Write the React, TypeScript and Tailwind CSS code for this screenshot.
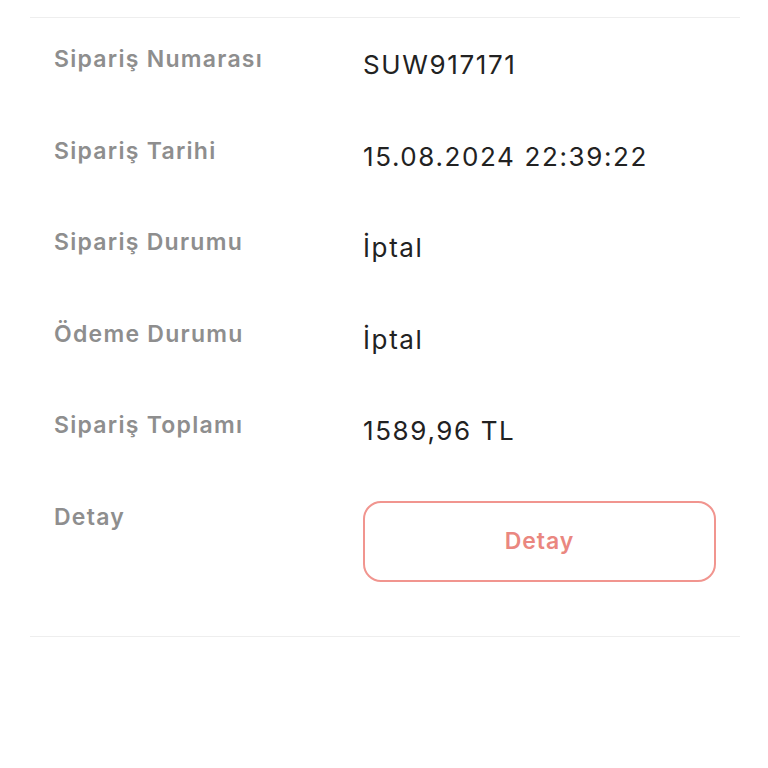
import React from "react";

const rows: { label: string; value: string }[] = [
  { label: "Sipariş Numarası", value: "SUW917171" },
  { label: "Sipariş Tarihi", value: "15.08.2024 22:39:22" },
  { label: "Sipariş Durumu", value: "İptal" },
  { label: "Ödeme Durumu", value: "İptal" },
  { label: "Sipariş Toplamı", value: "1589,96 TL" },
];

export default function App() {
  return (
    <div className="w-[768px] h-[768px] bg-white pt-[17px] pl-[30px] pr-[28px] font-['Inter',sans-serif]">
      <div className="border-t border-b border-[#eeeeee] pt-[27px] pb-[54px] pl-[24px]">
        {rows.map((r) => (
          <div key={r.label} className="flex h-[91.6px] items-start">
            <div className="w-[309px] text-[23px] leading-[28px] font-semibold text-[#8e8e8e] tracking-[0.055em]">
              {r.label}
            </div>
            <div className="mt-[4px] text-[26px] leading-[32px] text-[#222222] tracking-[0.062em]">
              {r.value}
            </div>
          </div>
        ))}
        <div className="flex items-start">
          <div className="w-[309px] text-[23px] leading-[28px] font-semibold text-[#8e8e8e] tracking-[0.055em]">
            Detay
          </div>
          <button className="-mt-[2px] w-[353px] h-[81px] rounded-[18px] border-2 border-[#f1958f] bg-white text-[23px] font-semibold text-[#ea8780] tracking-[0.04em] flex items-center justify-center">
            Detay
          </button>
        </div>
      </div>
    </div>
  );
}
